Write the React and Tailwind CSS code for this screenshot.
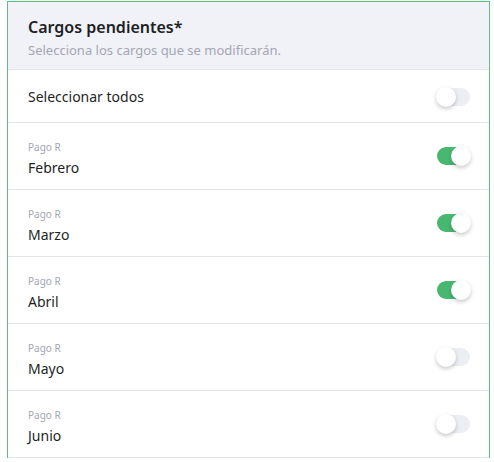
import React, { useState } from 'react';

const items = [
  { label: 'Pago R', name: 'Febrero', on: true },
  { label: 'Pago R', name: 'Marzo', on: true },
  { label: 'Pago R', name: 'Abril', on: true },
  { label: 'Pago R', name: 'Mayo', on: false },
  { label: 'Pago R', name: 'Junio', on: false },
];

function Toggle({ on, onClick }) {
  return (
    <button
      type="button"
      onClick={onClick}
      className={`relative w-[33px] h-[18px] rounded-full transition-colors ${on ? 'bg-[#48b871]' : 'bg-[#eceef4]'}`}
    >
      <span
        className={`absolute top-[-1px] w-[20px] h-[20px] rounded-full bg-white shadow-[0_2px_4px_rgba(0,0,0,0.22)] transition-all ${on ? 'left-[14px]' : 'left-[-1px]'}`}
      />
    </button>
  );
}

export default function App() {
  const [rows, setRows] = useState(items);
  const all = rows.every((r) => r.on);

  return (
    <div className="min-h-screen bg-white pt-px pl-[7px]" style={{ fontFamily: '"Noto Sans", "Open Sans", sans-serif' }}>
      <div className="w-[483px] border border-[#5cc27a] border-b-0">
        <div className="bg-[#f1f2f7] px-[20px] pt-[13px] pb-[9px] border-b border-[#e3e4e8]">
          <h2 className="text-[16px] font-semibold text-[#1d1f24] leading-[24px]">Cargos pendientes*</h2>
          <p className="text-[13px] text-[#a3a6b3] leading-[20px] mt-[1px]">Selecciona los cargos que se modificarán.</p>
        </div>
        <div className="flex items-center justify-between h-[53px] pl-[20px] pr-[19px] pt-[1px] border-b border-[#e3e4e8]">
          <span className="text-[14px] text-[#1d1f24]">Seleccionar todos</span>
          <Toggle on={all} onClick={() => setRows(rows.map((r) => ({ ...r, on: !all })))} />
        </div>
        {rows.map((r, i) => (
          <div key={r.name} className="flex items-center justify-between h-[67px] pl-[20px] pr-[19px] border-b border-[#e3e4e8]">
            <div className="flex flex-col pt-[6px]">
              <span className="text-[10px] text-[#a3a6b3] leading-[14px]">{r.label}</span>
              <span className="text-[14px] text-[#1d1f24] leading-[20px] mt-[4px]">{r.name}</span>
            </div>
            <Toggle on={r.on} onClick={() => setRows(rows.map((x, j) => (j === i ? { ...x, on: !x.on } : x)))} />
          </div>
        ))}
      </div>
    </div>
  );
}
